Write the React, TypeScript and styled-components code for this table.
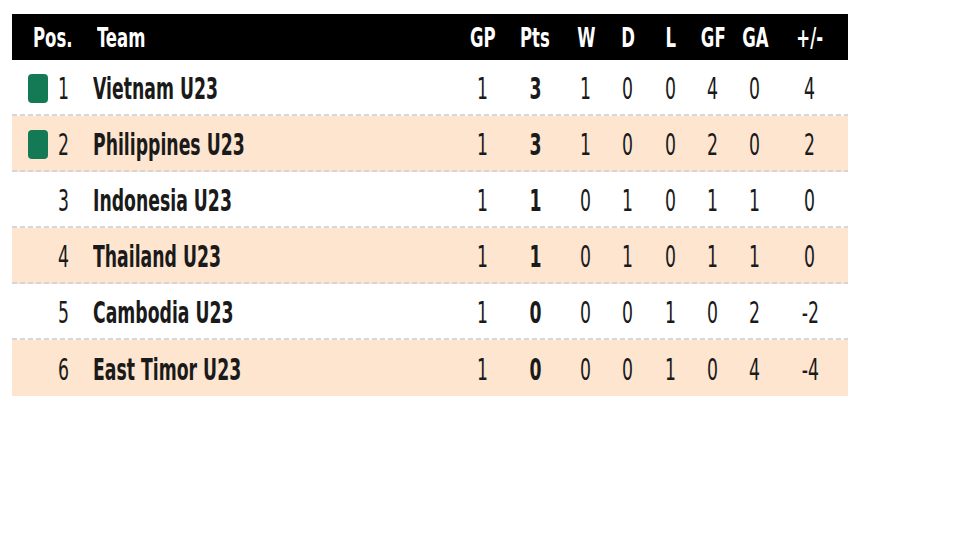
import React from "react";
import styled, { createGlobalStyle } from "styled-components";

const Global = createGlobalStyle`
  html, body { margin: 0; padding: 0; background: #ffffff; }
  body { font-family: "DejaVu Sans Condensed", "DejaVu Sans", sans-serif; }
  *, *::before, *::after { box-sizing: border-box; }
`;

const Page = styled.div`
  padding: 14px 0 0 12px;
`;

const Table = styled.div`
  width: 836px;
  display: flex;
  flex-direction: column;
`;

const cols = "20px 32px 1fr 52px 52px 50px 34px 52px 32px 52px 58px";

const HeaderRow = styled.div`
  display: grid;
  grid-template-columns: ${cols};
  align-items: center;
  height: 46px;
  padding: 1px 9px 0 16px;
  background: #000000;
  color: #ffffff;
`;

const Row = styled.div<{ $alt: boolean; $last: boolean }>`
  display: grid;
  grid-template-columns: ${cols};
  align-items: center;
  height: 56px;
  padding: 4px 9px ${(p) => (p.$last ? "0" : "2px")} 16px;
  background-color: ${(p) => (p.$alt ? "#fde5d0" : "#ffffff")};
  background-image: ${(p) =>
    p.$last ? "none" : "linear-gradient(to right, #d6d6d6 5px, transparent 5px)"};
  background-size: 8px 2px;
  background-repeat: repeat-x;
  background-position: 0 100%;
  color: #1a1a1a;
`;

const Cell = styled.div<{ $align?: "left" | "center"; $pad?: number; $span?: number }>`
  display: flex;
  justify-content: ${(p) => (p.$align === "left" ? "flex-start" : "center")};
  padding-left: ${(p) => p.$pad ?? 0}px;
  grid-column: ${(p) => (p.$span ? `span ${p.$span}` : "auto")};
  white-space: nowrap;
  min-width: 0;
`;

const Txt = styled.span<{ $size: number; $bold?: boolean; $scale: number; $origin?: string }>`
  display: inline-block;
  font-size: ${(p) => p.$size}px;
  font-weight: ${(p) => (p.$bold ? 700 : 400)};
  line-height: 1;
  transform: scaleX(${(p) => p.$scale});
  transform-origin: ${(p) => p.$origin ?? "center"};
`;

const Marker = styled.div`
  width: 20px;
  height: 29px;
  margin-top: -2px;
  border-radius: 4px;
  background: #147a55;
`;

type Team = {
  pos: number;
  name: string;
  gp: number;
  pts: number;
  w: number;
  d: number;
  l: number;
  gf: number;
  ga: number;
  diff: number;
  q: boolean;
};

const teams: Team[] = [
  { pos: 1, name: "Vietnam U23", gp: 1, pts: 3, w: 1, d: 0, l: 0, gf: 4, ga: 0, diff: 4, q: true },
  { pos: 2, name: "Philippines U23", gp: 1, pts: 3, w: 1, d: 0, l: 0, gf: 2, ga: 0, diff: 2, q: true },
  { pos: 3, name: "Indonesia U23", gp: 1, pts: 1, w: 0, d: 1, l: 0, gf: 1, ga: 1, diff: 0, q: false },
  { pos: 4, name: "Thailand U23", gp: 1, pts: 1, w: 0, d: 1, l: 0, gf: 1, ga: 1, diff: 0, q: false },
  { pos: 5, name: "Cambodia U23", gp: 1, pts: 0, w: 0, d: 0, l: 1, gf: 0, ga: 2, diff: -2, q: false },
  { pos: 6, name: "East Timor U23", gp: 1, pts: 0, w: 0, d: 0, l: 1, gf: 0, ga: 4, diff: -4, q: false },
];

const HS = 27;
const HK = 0.68;
const BS = 30;
const BK = 0.64;

const heads = ["GP", "Pts", "W", "D", "L", "GF", "GA", "+/-"];

export default function App() {
  return (
    <Page>
      <Global />
      <Table>
        <HeaderRow>
          <Cell $align="left" $pad={5} $span={2}>
            <Txt $size={HS} $bold $scale={HK} $origin="left">Pos.</Txt>
          </Cell>
          <Cell $align="left" $pad={17}>
            <Txt $size={HS} $bold $scale={HK} $origin="left">Team</Txt>
          </Cell>
          {heads.map((h) => (
            <Cell key={h}>
              <Txt $size={HS} $bold $scale={HK}>{h}</Txt>
            </Cell>
          ))}
        </HeaderRow>
        {teams.map((t, i) => {
          const stats = [t.gp, t.pts, t.w, t.d, t.l, t.gf, t.ga, t.diff];
          return (
            <Row key={t.pos} $alt={i % 2 === 1} $last={i === teams.length - 1}>
              <Cell>{t.q ? <Marker /> : null}</Cell>
              <Cell>
                <Txt $size={BS} $scale={BK}>{t.pos}</Txt>
              </Cell>
              <Cell $align="left" $pad={13}>
                <Txt $size={BS} $bold $scale={BK} $origin="left">{t.name}</Txt>
              </Cell>
              {stats.map((s, j) => (
                <Cell key={j}>
                  <Txt $size={BS} $bold={j === 1} $scale={BK}>{s}</Txt>
                </Cell>
              ))}
            </Row>
          );
        })}
      </Table>
    </Page>
  );
}
